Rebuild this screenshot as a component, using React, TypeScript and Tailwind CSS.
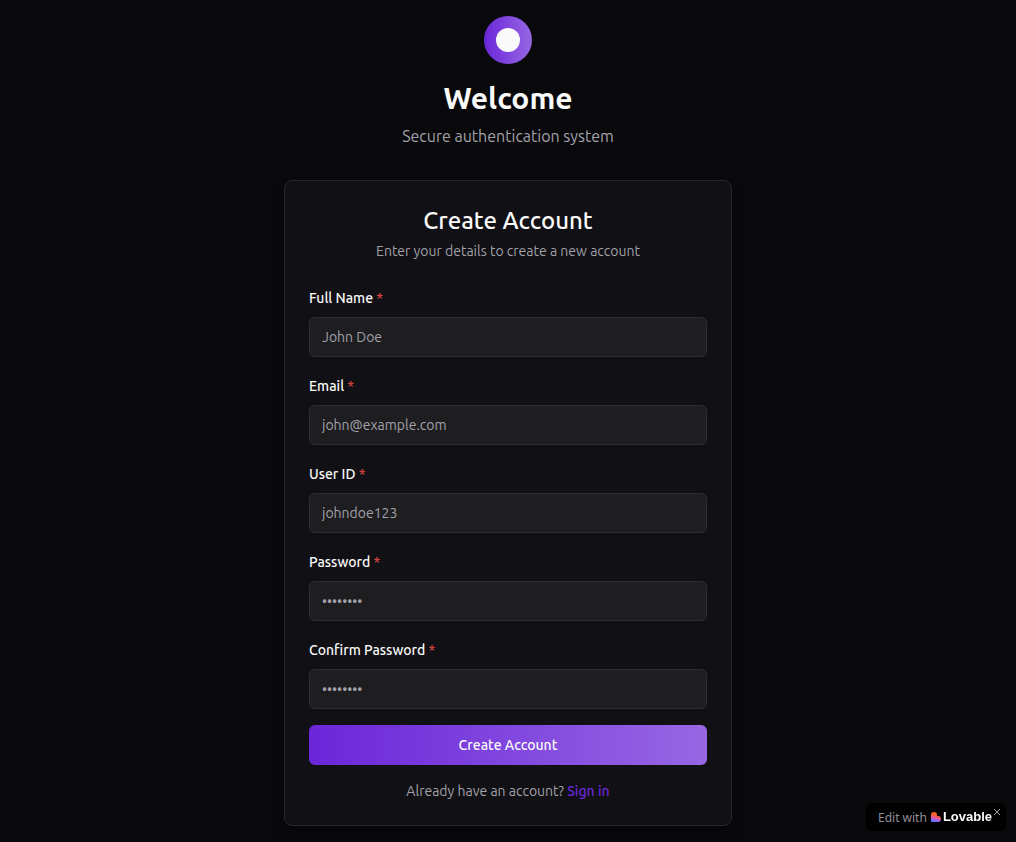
import { useState } from "react";

const fields = [
  { id: "name", label: "Full Name", type: "text", placeholder: "John Doe" },
  { id: "email", label: "Email", type: "email", placeholder: "john@example.com" },
  { id: "userId", label: "User ID", type: "text", placeholder: "johndoe123" },
  { id: "password", label: "Password", type: "password", placeholder: "••••••••" },
  { id: "confirm", label: "Confirm Password", type: "password", placeholder: "••••••••" },
];

function LovableMark() {
  return (
    <svg viewBox="0 0 20 20" className="size-[10px]" aria-hidden="true">
      <defs>
        <linearGradient id="mark" x1="0.6" y1="0" x2="0.35" y2="1">
          <stop offset="0.2" stopColor="#ff6a16" />
          <stop offset="0.45" stopColor="#fa5a50" />
          <stop offset="0.7" stopColor="#c85bd5" />
          <stop offset="1" stopColor="#4b73ff" />
        </linearGradient>
      </defs>
      <path d="M0 20V6a6 6 0 0 1 12 0v2h2a6 6 0 0 1 0 12Z" fill="url(#mark)" />
    </svg>
  );
}

function EditBadge() {
  const [open, setOpen] = useState(true);
  if (!open) return null;
  return (
    <div className="fixed right-[10px] bottom-[11px] flex h-7 items-center rounded-md bg-black pr-[5px] pl-3">
      <a href="#lovable" className="flex items-center gap-1 text-xs leading-4 text-[#8f8f99]">
        <span className="pt-px font-['Noto_Sans',sans-serif]">Edit with</span>
        <span className="flex items-center gap-[2px]">
          <LovableMark />
          <span className="font-['Liberation_Sans',sans-serif] text-[13px] font-bold text-[#fafafa]">Lovable</span>
        </span>
      </a>
      <button type="button" aria-label="Dismiss" onClick={() => setOpen(false)} className="ml-px self-start pt-[5px]">
        <svg viewBox="0 0 8 8" className="size-2" aria-hidden="true">
          <path d="M1 1l6 6M7 1L1 7" stroke="#a1a1aa" strokeWidth="1" fill="none" />
        </svg>
      </button>
    </div>
  );
}

export default function App() {
  return (
    <div className="flex min-h-screen items-center justify-center bg-[#09090b] p-4 font-['Ubuntu','Open_Sans',sans-serif] text-[#fafafa]">
      <main className="w-full max-w-md">
        <header className="mb-8 flex flex-col items-center text-center">
          <div className="mb-4 flex size-12 items-center justify-center rounded-full bg-linear-to-r/srgb from-[#6b26d9] to-[#9767e4]">
            <div className="size-6 rounded-full bg-[#fafafa]" />
          </div>
          <h1 className="text-3xl leading-9 font-bold">Welcome</h1>
          <p className="mt-2 text-base text-[#a1a1aa]">Secure authentication system</p>
        </header>

        <section className="rounded-lg border border-[#27272a] bg-[#111014] p-6 shadow-lg shadow-black/10">
          <div className="mb-6 text-center">
            <h2 className="text-2xl leading-8 font-medium">Create Account</h2>
            <p className="mt-1 text-sm text-[#a1a1aa]">Enter your details to create a new account</p>
          </div>
          <form className="flex flex-col gap-4" onSubmit={(event) => event.preventDefault()}>
            {fields.map((field) => (
              <div key={field.id} className="flex flex-col gap-[6px]">
                <label htmlFor={field.id} className="text-sm leading-[26px] font-medium">
                  {field.label} <span className="text-[#dc4444]">*</span>
                </label>
                <input
                  id={field.id}
                  type={field.type}
                  placeholder={field.placeholder}
                  className="h-10 w-full rounded-md border border-[#2f2f32] bg-[#1e1e20] px-3 text-sm placeholder:text-[#a1a1aa]"
                />
              </div>
            ))}
            <button
              type="submit"
              className="h-10 w-full rounded-md bg-linear-to-r/srgb from-[#6b26d9] to-[#9767e4] text-sm font-medium"
            >
              Create Account
            </button>
          </form>
          <p className="mt-4 text-center text-sm text-[#a1a1aa]">
            Already have an account?{" "}
            <a href="#signin" className="font-medium text-[#6b26d9]">
              Sign in
            </a>
          </p>
        </section>
      </main>
      <EditBadge />
    </div>
  );
}
